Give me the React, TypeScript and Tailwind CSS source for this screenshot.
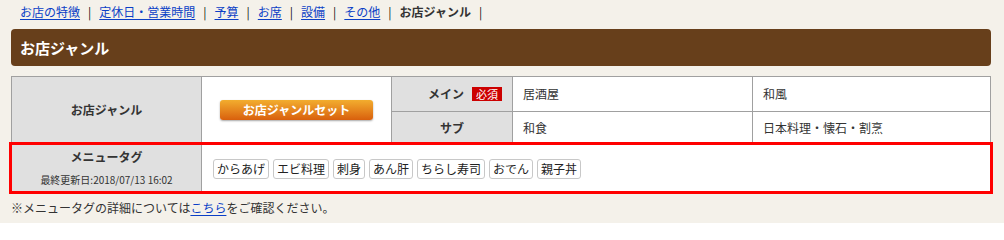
const font = "font-['Noto_Sans_CJK_JP','Noto_Sans',sans-serif]";

const navItems = [
  { label: "お店の特徴", link: true },
  { label: "定休日・営業時間", link: true },
  { label: "予算", link: true },
  { label: "お席", link: true },
  { label: "設備", link: true },
  { label: "その他", link: true },
  { label: "お店ジャンル", link: false },
];

const tags = ["からあげ", "エビ料理", "刺身", "あん肝", "ちらし寿司", "おでん", "親子丼"];

export default function App() {
  return (
    <div className={`h-[223px] overflow-hidden bg-[#f4f1ea] text-[12px] leading-none text-[#333] ${font}`}>
      <nav className="flex items-center h-[16px] pt-[4px] pl-[20px] box-content">
        {navItems.map((item) => (
          <div key={item.label} className="flex items-center">
            {item.link ? (
              <a href="#" className="text-[#0b3fc6] underline underline-offset-2">
                {item.label}
              </a>
            ) : (
              <span className="font-bold text-[#333]">{item.label}</span>
            )}
            <span className="mx-[8px] text-[#111]">|</span>
          </div>
        ))}
      </nav>

      <div className="mx-[11px] mt-[9px] h-[37px] w-[980px] rounded-[4px] bg-[#673f1b] px-[9px] flex items-center">
        <h2 className="text-white font-bold text-[15px]">お店ジャンル</h2>
      </div>

      <div className="mx-[11px] mt-[10px] w-[980px]">
        <div className="grid grid-cols-[189px_189px_120px_239px_1fr] gap-px bg-[#a0a0a0] border border-[#a0a0a0]">
          <div className="row-span-2 bg-[#e0e0e0] flex items-center justify-center font-bold text-[#333]">
            お店ジャンル
          </div>
          <div className="row-span-2 bg-white flex items-center justify-center">
            <button className="w-[153px] h-[20px] rounded-[3px] bg-gradient-to-b from-[#f2ad2e] to-[#d85f0c] text-white font-bold text-[12px] shadow-[0_1px_2px_rgba(0,0,0,0.35)]">
              お店ジャンルセット
            </button>
          </div>
          <div className="h-[34px] bg-[#e0e0e0] flex items-center justify-end gap-[8px] pr-[10px] font-bold">
            <span>メイン</span>
            <span className="bg-[#cc0000] text-white text-[11px] w-[30px] h-[14px] flex items-center justify-center font-normal">
              必須
            </span>
          </div>
          <div className="bg-white flex items-center pl-[10px]">居酒屋</div>
          <div className="bg-white flex items-center pl-[10px]">和風</div>
          <div className="h-[31px] bg-[#e0e0e0] flex items-center justify-center font-bold">サブ</div>
          <div className="bg-white flex items-center pl-[10px]">和食</div>
          <div className="bg-white flex items-center pl-[10px]">日本料理・懐石・割烹</div>
        </div>

        <div className="flex h-[48px] border-x border-b border-[#a0a0a0] outline-[3px] outline-solid outline-[#ff0000] outline-offset-[-1px]">
          <div className="w-[190px] bg-[#e0e0e0] border-r border-[#a0a0a0] flex flex-col items-center pt-[7px]">
            <span className="font-bold text-[12px]">メニュータグ</span>
            <span className="mt-[12px] text-[10px] text-[#333]">最終更新日:2018/07/13 16:02</span>
          </div>
          <div className="flex-1 bg-white flex items-start gap-[4px] pl-[11px] pt-[15px]">
            {tags.map((t) => (
              <span
                key={t}
                className="h-[20px] px-[3px] flex items-center rounded-[3px] border border-[#c8c8c8] bg-white text-[12px] text-[#222]"
              >
                {t}
              </span>
            ))}
          </div>
        </div>
      </div>

      <p className="mx-[11px] mt-[10px] text-[12px] text-[#333]">
        ※メニュータグの詳細については
        <a href="#" className="text-[#0b3fc6] underline underline-offset-2">
          こちら
        </a>
        をご確認ください。
      </p>
    </div>
  );
}
